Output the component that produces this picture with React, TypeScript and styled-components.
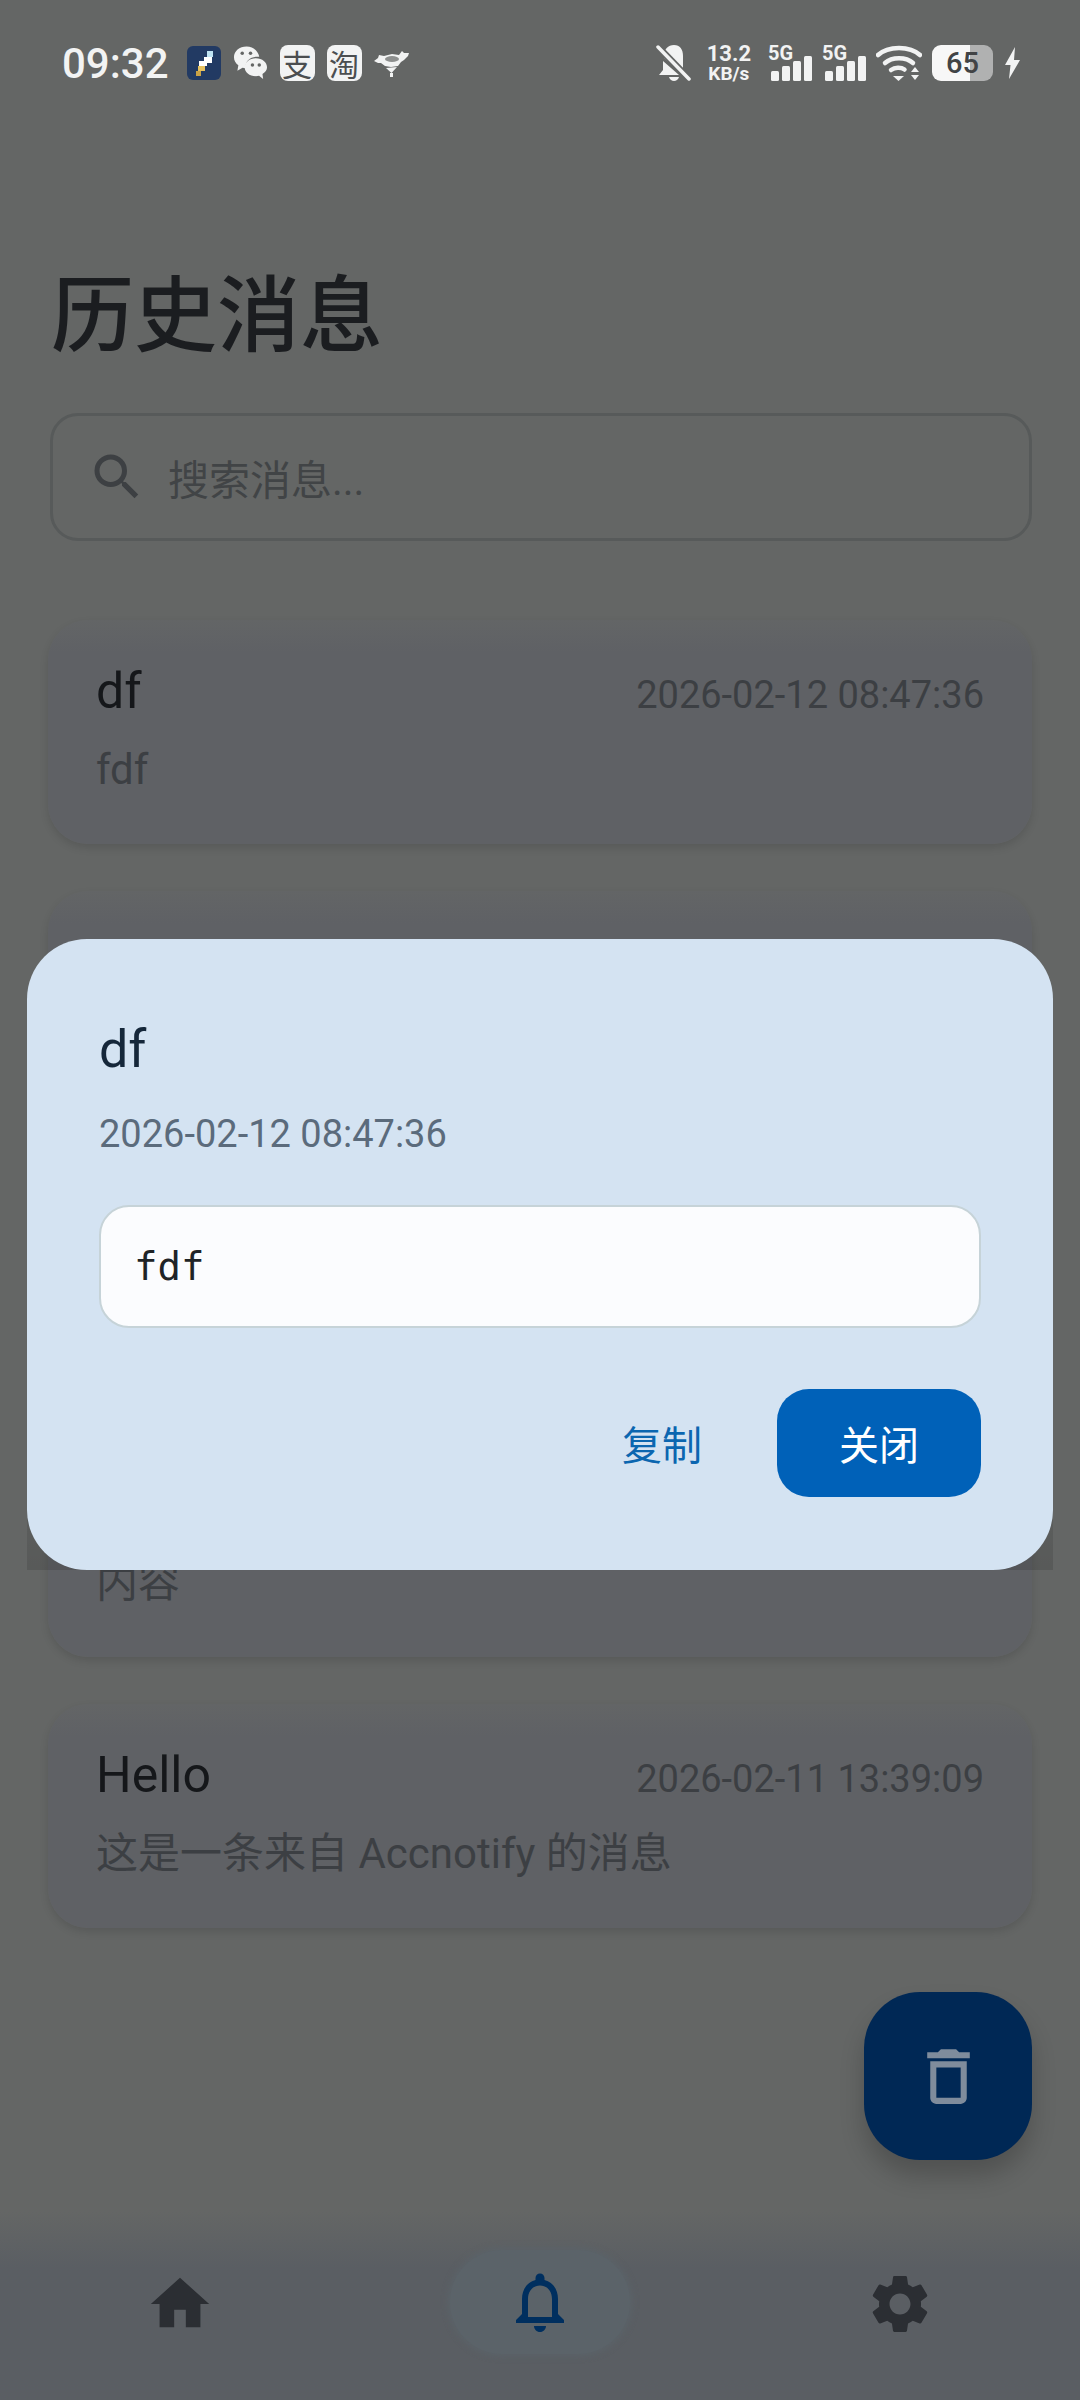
import React from "react";
import styled, { createGlobalStyle } from "styled-components";
import { MdDeleteOutline, MdHome, MdNotificationsNone, MdSearch, MdSettings } from "react-icons/md";

const sansStack = `Roboto, "Noto Sans CJK SC", sans-serif`;

type Message = { id: number; title: string; time: string; body: string };

const messages: Message[] = [
  { id: 1, title: "df", time: "2026-02-12 08:47:36", body: "fdf" },
  { id: 2, title: "", time: "", body: "" },
  { id: 3, title: "", time: "", body: "" },
  { id: 4, title: "", time: "", body: "内容" },
  { id: 5, title: "Hello", time: "2026-02-11 13:39:09", body: "这是一条来自 Accnotify 的消息" },
];

function UpdaterIcon() {
  return (
    <svg width="34" height="34" viewBox="0 0 34 34">
      <rect width="34" height="34" rx="6" fill="#223a63" />
      <rect x="20" y="5" width="6" height="6" fill="#bfe3f2" />
      <rect x="17" y="11" width="8" height="6" fill="#ffffff" />
      <rect x="12" y="15" width="8" height="5" fill="#ffffff" />
      <rect x="11" y="20" width="7" height="5" fill="#e6c15f" />
      <rect x="9" y="25" width="5" height="5" fill="#c9a246" />
    </svg>
  );
}

function WechatIcon() {
  return (
    <svg width="35" height="36" viewBox="0 0 36 36">
      <path d="M14 1C6.500 1 1 5.900 1 12c0 3.400 1.800 6.400 4.500 8.400L4.500 26l5.300-3c1 .3 2.200.4 3.200.5C12 16 18 11 27 11.500 25.800 5.500 20.400 1 14 1z" fill="#f2f3f3" />
      <path d="M23.500 13C16.800 13 12 17.300 12 22.300s4.800 9.200 11.500 9.200c1.200 0 2.300-.1 3.300-.4l4.200 3.400-.7-5.300c3-1.800 4.700-4.200 4.700-6.900 0-5-4.800-9.300-11.500-9.300z" fill="#f2f3f3" />
      <circle cx="9.500" cy="8" r="1.800" fill="#646665" />
      <circle cx="18" cy="8" r="1.800" fill="#646665" />
      <circle cx="20" cy="20" r="1.800" fill="#646665" />
      <circle cx="27" cy="20" r="1.800" fill="#646665" />
    </svg>
  );
}

function CandyIcon() {
  return (
    <svg width="35" height="30" viewBox="0 0 35 30">
      <path d="M0 13l4-3 1-3 5 1 8-2 7 1 3-4 2 2 5 0-1 3-4 4-3 2-3 4-7 1-6-1-4-3-3 0z" fill="#f2f3f3" />
      <ellipse cx="18" cy="11" rx="7" ry="3" fill="#8d8f8e" />
      <path d="M12 20l5.500 5 5.500-6z" fill="#f2f3f3" />
      <rect x="16" y="25" width="3" height="4" fill="#f2f3f3" />
    </svg>
  );
}

function MutedBell() {
  return (
    <svg width="36" height="38" viewBox="0 0 36 38">
      <path d="M18 1c-6 0-10 4.500-10 10v3L27 31h3.500L27 26V12C27 5.500 24 1 18 1z" fill="#f2f3f3" />
      <path d="M7 17v9l-4 5h20z" fill="#f2f3f3" />
      <path d="M13 33h10c-.8 2.400-2.800 4-5 4s-4.200-1.600-5-4z" fill="#f2f3f3" />
      <path d="M2 3l31 32" stroke="#646665" strokeWidth="7" />
      <path d="M2 3l31 32" stroke="#f2f3f3" strokeWidth="3.500" strokeLinecap="round" />
    </svg>
  );
}

function SignalBars() {
  return (
    <svg width="41" height="25" viewBox="0 0 41 25">
      <rect x="0" y="15" width="8" height="10" rx="1.500" fill="#f2f3f3" />
      <rect x="11" y="10" width="8" height="15" rx="1.500" fill="#f2f3f3" />
      <rect x="22" y="5" width="8" height="20" rx="1.500" fill="#f2f3f3" />
      <rect x="33" y="0" width="8" height="25" rx="1.500" fill="#f2f3f3" />
    </svg>
  );
}

function WifiIcon() {
  return (
    <svg width="46" height="38" viewBox="0 0 46 38" fill="none">
      <path d="M2 11C12 1.500 34 1.500 44 11" stroke="#f2f3f3" strokeWidth="4.500" strokeLinecap="round" />
      <path d="M9 19c7-6.500 21-6.500 28 0" stroke="#f2f3f3" strokeWidth="4.500" strokeLinecap="round" />
      <path d="M15 26c4-3 10-3 13.500-.5" stroke="#f2f3f3" strokeWidth="4.500" strokeLinecap="round" />
      <path d="M17 32h11l-5.500 5z" fill="#f2f3f3" />
      <path d="M35 28l4-5 4 5z" fill="#f2f3f3" />
      <path d="M35 31l4 5 4-5z" fill="#f2f3f3" />
    </svg>
  );
}

function ChargeBolt() {
  return (
    <svg width="15" height="32" viewBox="0 0 15 32">
      <path d="M10 0L0 18h5.500L4 32l11-19H9z" fill="#f2f3f3" />
    </svg>
  );
}

export default function App() {
  return (
    <>
      <GlobalStyle />
      <Page>
        <StatusBar>
          <StatusLeft>
            <Clock>09:32</Clock>
            <NotificationIcons>
              <UpdaterIcon />
              <WechatIcon />
              <AppTile>支</AppTile>
              <AppTile>淘</AppTile>
              <CandyIcon />
            </NotificationIcons>
          </StatusLeft>
          <StatusRight>
            <MutedBell />
            <NetSpeed>
              <SpeedValue>13.2</SpeedValue>
              <SpeedUnit>KB/s</SpeedUnit>
            </NetSpeed>
            <SignalGroup>
              <SignalLabel>5G</SignalLabel>
              <SignalBars />
            </SignalGroup>
            <SignalGroup>
              <SignalLabel>5G</SignalLabel>
              <SignalBars />
            </SignalGroup>
            <WifiIcon />
            <Battery>65</Battery>
            <ChargeBolt />
          </StatusRight>
        </StatusBar>

        <PageTitle>历史消息</PageTitle>

        <SearchBox>
          <MdSearch size={60} color="#3d4043" />
          <SearchHint>搜索消息...</SearchHint>
        </SearchBox>

        <MessageList>
          {messages.map((m) => (
            <MessageCard key={m.id}>
              <CardHead>
                <CardTitle>{m.title}</CardTitle>
                <CardTime>{m.time}</CardTime>
              </CardHead>
              <CardBody>{m.body}</CardBody>
            </MessageCard>
          ))}
        </MessageList>

        <BottomNav>
          <NavItem>
            <MdHome size={70} color="#2b2e33" />
          </NavItem>
          <NavItem>
            <ActivePill>
              <MdNotificationsNone size={72} color="#002f5f" />
            </ActivePill>
          </NavItem>
          <NavItem>
            <MdSettings size={70} color="#2b2e33" />
          </NavItem>
        </BottomNav>

        <ClearFab>
          <MdDeleteOutline size={73} color="#7f8c9c" />
        </ClearFab>

        <DialogFrame>
          <Dialog>
            <DialogTitle>df</DialogTitle>
            <DialogTime>2026-02-12 08:47:36</DialogTime>
            <DialogContent>fdf</DialogContent>
            <DialogActions>
              <CopyButton>复制</CopyButton>
              <CloseButton>关闭</CloseButton>
            </DialogActions>
          </Dialog>
        </DialogFrame>
      </Page>
    </>
  );
}

const GlobalStyle = createGlobalStyle`
  html, body {
    margin: 0;
    padding: 0;
    background: #646665;
  }
  * {
    box-sizing: border-box;
  }
`;

const Page = styled.div`
  position: relative;
  display: flex;
  flex-direction: column;
  width: 1080px;
  height: 2400px;
  overflow: hidden;
  background: #646665;
  font-family: ${sansStack};
`;

const StatusBar = styled.div`
  display: flex;
  align-items: center;
  justify-content: space-between;
  height: 126px;
  padding: 0 60px 0 62px;
  flex-shrink: 0;
`;

const StatusLeft = styled.div`
  display: flex;
  align-items: center;
  gap: 18px;
`;

const Clock = styled.span`
  font-size: 42px;
  font-weight: 500;
  color: #f2f3f3;
`;

const NotificationIcons = styled.div`
  display: flex;
  align-items: center;
  gap: 12px;
`;

const AppTile = styled.div`
  display: flex;
  align-items: center;
  justify-content: center;
  width: 35px;
  height: 36px;
  border-radius: 8px;
  background: #f2f3f3;
  color: #4b4e50;
  font-family: "Noto Sans CJK SC", sans-serif;
  font-size: 30px;
  line-height: 1;
`;

const StatusRight = styled.div`
  display: flex;
  align-items: center;
`;

const NetSpeed = styled.div`
  display: flex;
  flex-direction: column;
  align-items: center;
  margin: 0 17px 0 15px;
  color: #f2f3f3;
  font-weight: 700;
`;

const SpeedValue = styled.span`
  font-size: 22px;
  line-height: 21px;
`;

const SpeedUnit = styled.span`
  font-size: 19px;
  line-height: 19px;
`;

const SignalGroup = styled.div`
  position: relative;
  width: 54px;
  height: 36px;

  & > svg {
    position: absolute;
    top: 11px;
    left: 3px;
  }
`;

const SignalLabel = styled.span`
  position: absolute;
  top: -1px;
  left: 0;
  z-index: 1;
  font-size: 20px;
  font-weight: 700;
  line-height: 18px;
  color: #f2f3f3;
`;

const Battery = styled.div`
  display: flex;
  align-items: center;
  justify-content: center;
  width: 61px;
  height: 36px;
  margin: 0 12px 0 10px;
  border-radius: 9px;
  background: linear-gradient(90deg, #f7f7f7 0 62%, #b0b1b1 62% 100%);
  color: #414345;
  font-size: 29px;
  font-weight: 500;
`;

const PageTitle = styled.h1`
  margin: 133px 0 0;
  padding-left: 51px;
  height: 100px;
  font-size: 83px;
  line-height: 100px;
  font-weight: 500;
  color: #1b1d20;
  font-family: "Noto Sans CJK SC", sans-serif;
`;

const SearchBox = styled.div`
  display: flex;
  align-items: center;
  gap: 21px;
  height: 128px;
  margin: 54px 48px 0 50px;
  padding-left: 34px;
  border: 3px solid #575a5a;
  border-radius: 28px;
  flex-shrink: 0;
`;

const SearchHint = styled.span`
  font-size: 41px;
  color: #414446;
`;

const MessageList = styled.div`
  display: flex;
  flex-direction: column;
  gap: 47px;
  margin: 79px 48px 0 48px;
`;

const MessageCard = styled.div`
  display: flex;
  flex-direction: column;
  height: 224px;
  padding: 42px 48px 0 48px;
  border-radius: 40px;
  background: linear-gradient(180deg, #636566 0, #5f6165 32px);
  box-shadow: 0 4px 8px rgba(0, 0, 0, 0.12);
`;

const CardHead = styled.div`
  display: flex;
  align-items: baseline;
  justify-content: space-between;
  height: 60px;
`;

const CardTitle = styled.span`
  font-size: 50px;
  color: #15171a;
`;

const CardTime = styled.span`
  font-size: 38px;
  color: #3c3f43;
`;

const CardBody = styled.div`
  margin-top: 20px;
  min-height: 56px;
  font-size: 42px;
  line-height: 56px;
  color: #3c3f43;
`;

const BottomNav = styled.nav`
  display: grid;
  grid-template-columns: repeat(3, 360px);
  height: 188px;
  margin-top: auto;
  padding-top: 38px;
  background: linear-gradient(180deg, #646665 0, #5a5e63 56px);
  flex-shrink: 0;
`;

const NavItem = styled.div`
  display: flex;
  align-items: flex-start;
  justify-content: center;
  height: 108px;

  & > svg {
    margin-top: 19px;
  }
`;

const ActivePill = styled.div`
  display: flex;
  align-items: center;
  justify-content: center;
  width: 180px;
  height: 104px;
  border-radius: 52px;
  background: #5b6369;
  box-shadow: 0 0 6px 2px #5b6369;
`;

const ClearFab = styled.div`
  position: absolute;
  right: 48px;
  bottom: 240px;
  display: flex;
  align-items: center;
  justify-content: center;
  width: 168px;
  height: 168px;
  border-radius: 56px;
  background: #002855;
  box-shadow: 0 16px 24px rgba(0, 0, 0, 0.2);
`;

const DialogFrame = styled.div`
  position: absolute;
  left: 27px;
  top: 939px;
  width: 1026px;
  height: 631px;
  background: linear-gradient(180deg, rgba(0, 0, 0, 0) 70%, rgba(0, 0, 0, 0.12) 100%);
`;

const Dialog = styled.div`
  display: flex;
  flex-direction: column;
  height: 100%;
  padding: 79px 72px 0 72px;
  border-radius: 60px;
  background: #d4e3f2;
`;

const DialogTitle = styled.div`
  font-size: 52px;
  line-height: 64px;
  color: #15273a;
`;

const DialogTime = styled.div`
  margin-top: 28px;
  font-size: 38px;
  line-height: 48px;
  color: #5b6b7c;
`;

const DialogContent = styled.div`
  display: flex;
  align-items: center;
  height: 123px;
  margin-top: 47px;
  padding-left: 33px;
  border: 2px solid #c6d3d8;
  border-radius: 30px;
  background: #fbfcfe;
  color: #202326;
  font-family: "DejaVu Sans Mono", monospace;
  font-size: 39px;
`;

const DialogActions = styled.div`
  display: flex;
  align-items: center;
  justify-content: flex-end;
  gap: 75px;
  margin-top: 61px;
`;

const CopyButton = styled.span`
  font-family: "Noto Sans CJK SC", sans-serif;
  font-size: 40px;
  color: #0b66b0;
`;

const CloseButton = styled.div`
  display: flex;
  align-items: center;
  justify-content: center;
  width: 204px;
  height: 108px;
  border-radius: 32px;
  background: #0061b8;
  color: #ffffff;
  font-family: "Noto Sans CJK SC", sans-serif;
  font-size: 40px;
`;
